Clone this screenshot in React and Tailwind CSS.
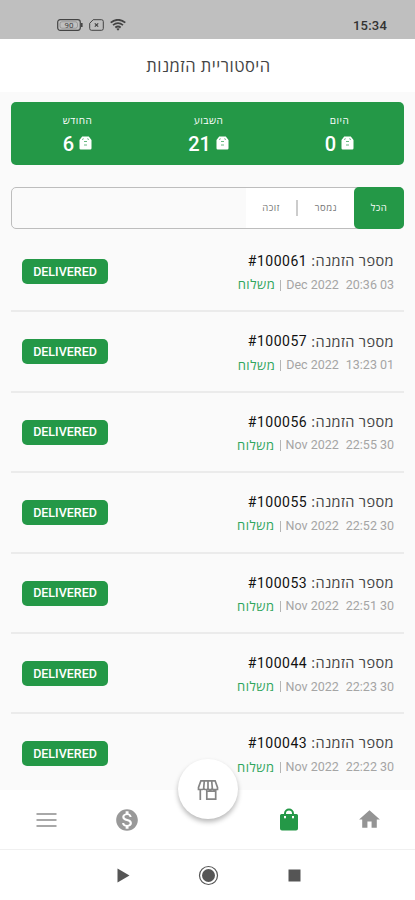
import React from "react";

const stats = [
  { label: "היום", value: "0" },
  { label: "השבוע", value: "21" },
  { label: "החודש", value: "6" },
];

const orders = [
  { id: "100061", date: "Dec 2022", time: "20:36", day: "03" },
  { id: "100057", date: "Dec 2022", time: "13:23", day: "01" },
  { id: "100056", date: "Nov 2022", time: "22:55", day: "30" },
  { id: "100055", date: "Nov 2022", time: "22:52", day: "30" },
  { id: "100053", date: "Nov 2022", time: "22:51", day: "30" },
  { id: "100044", date: "Nov 2022", time: "22:23", day: "30" },
  { id: "100043", date: "Nov 2022", time: "22:22", day: "30" },
];

function StatusBar() {
  return (
    <header className="flex h-[39px] shrink-0 items-start justify-between bg-[#bfbfbf] pl-[57px] pr-[28px] pt-[18px]">
      <div className="flex items-center gap-[6px] pt-px text-[#444]">
        <svg width="26" height="12" viewBox="0 0 26 12" fill="none" stroke="currentColor">
          <rect x="0.7" y="0.7" width="22.6" height="10.6" rx="2.5" strokeWidth="1.2" />
          <path d="M24.8 4v4" strokeWidth="1.6" />
          <rect x="3" y="2.8" width="17.5" height="6.4" rx="2" strokeWidth="0.5" opacity="0.6" />
          <text x="12" y="8.8" textAnchor="middle" fontSize="8" fontFamily="Roboto, sans-serif" fill="currentColor" stroke="none">90</text>
        </svg>
        <svg width="15" height="12" viewBox="0 0 15 12" fill="none" stroke="currentColor">
          <path d="M4.2.7h8.3a1.8 1.8 0 0 1 1.8 1.8v7a1.8 1.8 0 0 1-1.8 1.8h-10A1.8 1.8 0 0 1 .7 9.500V4.300Z" strokeWidth="1" />
          <path d="m5.800 4.300 3.400 3.400m0-3.400L5.800 7.700" strokeWidth="1.2" />
        </svg>
        <svg width="16" height="12" viewBox="0 0 16 12" fill="none" stroke="currentColor" strokeWidth="1.800">
          <path d="M.7 3.600q7.300-5.600 14.600 0M3 6.100q5-3.800 10 0M5.300 8.500q2.700-2 5.400 0" />
          <path d="m6.300 9.800 1.700 2 1.700-2q-1.700-1.200-3.400 0Z" fill="currentColor" stroke="none" />
        </svg>
      </div>
      <span className="text-[13px] font-medium leading-[16px] tracking-[0.2px] text-[#333]">15:34</span>
    </header>
  );
}

function BoxIcon() {
  return (
    <svg width="13" height="14" viewBox="0 0 13 14">
      <path d="M3.200.5h6.600l2.700 3.500v8.300a1.200 1.200 0 0 1-1.200 1.200H1.700a1.200 1.200 0 0 1-1.200-1.200V4Z" fill="#fff" />
      <path d="m3.500 4 .8-1.700M9.500 4l-.8-1.700M5 5.500h3M5 9h3" stroke="#249847" strokeWidth="0.7" />
    </svg>
  );
}

function Order({ order }) {
  return (
    <li className="flex h-[80.4px] shrink-0 items-start justify-between border-b-2 border-[#ebebeb] pl-[11px] pr-[10px]">
      <span className="mt-[27px] flex h-[25px] w-[86px] items-center justify-center rounded-[5px] bg-[#249847] pt-px text-[12.500px] font-medium text-white">DELIVERED</span>
      <div className="flex flex-col items-end pt-[18px]">
        <div className="flex h-[22px] items-center gap-[4px] text-[14px] text-[#111]">
          <span className="pt-px tracking-[0.500px]">#{order.id}</span>
          <span dir="rtl" className="font-['Open_Sans',sans-serif] text-[14.500px] tracking-[0.400px] text-[#444]">מספר הזמנה:</span>
        </div>
        <div className="mt-[2px] flex h-[22px] items-center text-[12.500px] text-[#a5a5a5]">
          <span dir="rtl" className="font-['Open_Sans',sans-serif] text-[13px] tracking-[0.500px] text-[#2fa55c]">משלוח</span>
          <span className="mx-[5px] h-[11px] w-px bg-[#b5b5b5]" />
          <span>{order.date}</span>
          <span className="ml-[7px]">{order.time}</span>
          <span className="ml-[3px]">{order.day}</span>
        </div>
      </div>
    </li>
  );
}

export default function App() {
  return (
    <div className="flex h-[900px] w-[415px] flex-col overflow-hidden bg-[#fafafa] font-[Roboto,sans-serif]">
      <StatusBar />
      <h1 dir="rtl" className="flex h-[53px] shrink-0 items-center justify-center bg-white pl-[2px] pt-px font-['Open_Sans',sans-serif] text-[16.500px] tracking-[0.500px] text-[#444]">היסטוריית הזמנות</h1>
      <section dir="rtl" className="mx-[11px] mt-[10px] grid h-[63px] shrink-0 grid-cols-3 rounded-[5px] bg-[#249847] text-white">
        {stats.map((s) => (
          <div key={s.label} className="flex flex-col items-center pl-[2px] pt-[10px]">
            <span className="font-['Open_Sans',sans-serif] text-[10px] leading-[16px] tracking-[0.500px]">{s.label}</span>
            <div className="mt-[2px] flex h-[26px] items-center gap-[5px]">
              <BoxIcon />
              <span className="pt-[2px] text-[20px] font-medium leading-none">{s.value}</span>
            </div>
          </div>
        ))}
      </section>
      <nav dir="rtl" className="mx-[11px] mt-[22px] flex h-[42px] shrink-0 items-stretch rounded-[5px] border border-[#bdbdbd] font-['Open_Sans',sans-serif] text-[9.500px] tracking-[0.500px] text-[#777]">
        <button className="-my-px -mr-px w-[50px] rounded-[5px] bg-[#249847] pt-px text-white">הכל</button>
        <div className="flex w-[108px] items-center bg-white">
          <button className="w-[56px] pt-px">נמסר</button>
          <span className="h-[16px] w-[2px] bg-[#ccc]" />
          <button className="w-[50px] pt-px">זוכה</button>
        </div>
      </nav>
      <ul className="mx-[11px] mt-[3px] flex min-h-0 flex-1 flex-col overflow-hidden">
        {orders.map((o) => <Order key={o.id} order={o} />)}
      </ul>
      <nav className="relative flex h-[60px] shrink-0 items-center border-b border-[#f0f0f0] bg-white">
        <a className="flex w-[92px] justify-center">
          <svg width="21" height="16" viewBox="0 0 21 16" stroke="#a8a8a8" strokeWidth="2"><path d="M.5 2h20M.5 8h20M.5 14h20" /></svg>
        </a>
        <a className="flex w-[70px] justify-center">
          <svg width="26" height="26" viewBox="0 0 24 24" fill="#999"><path d="M12 2C6.480 2 2 6.480 2 12s4.480 10 10 10 10-4.480 10-10S17.520 2 12 2zm1.410 16.090V20h-2.670v-1.930c-1.710-.36-3.160-1.460-3.270-3.400h1.960c.1 1.050.82 1.870 2.650 1.870 1.960 0 2.400-.98 2.400-1.590 0-.83-.44-1.610-2.670-2.140-2.480-.6-4.180-1.620-4.180-3.670 0-1.720 1.390-2.840 3.110-3.210V4h2.670v1.950c1.860.45 2.790 1.860 2.850 3.390H14.300c-.05-1.110-.64-1.870-2.220-1.870-1.500 0-2.400.68-2.400 1.640 0 .84.65 1.390 2.670 1.910s4.180 1.390 4.180 3.910c-.01 1.830-1.380 2.830-3.120 3.160z" /></svg>
        </a>
        <span className="flex-1" />
        <a className="flex w-[70px] justify-center">
          <svg width="20" height="24" viewBox="0 0 20 24"><path d="M6 7V5.500a4 4 0 0 1 8 0V7" fill="none" stroke="#249847" strokeWidth="2" /><path d="M2.500 6h15A1.500 1.500 0 0 1 19 7.500v13a2 2 0 0 1-2 2H3a2 2 0 0 1-2-2v-13A1.500 1.500 0 0 1 2.500 6Z" fill="#249847" /><path d="M5 8h2v1.500a1 1 0 0 1-2 0ZM13 8h2v1.500a1 1 0 0 1-2 0Z" fill="#fff" /></svg>
        </a>
        <a className="flex w-[91px] justify-center">
          <svg width="25" height="25" viewBox="0 0 24 24" fill="#949494"><path d="M10 20v-6h4v6h5v-8h3L12 3 2 12h3v8z" /></svg>
        </a>
        <a className="absolute left-[178px] top-[-31px] flex h-[60px] w-[60px] items-center justify-center rounded-full bg-white shadow-[0_3px_5px_rgba(0,0,0,0.28)]">
          <svg className="mt-px" width="22" height="22" viewBox="0 0 22 22" fill="none" stroke="#858585" strokeWidth="1.700">
            <path d="M3.500 1.800h15M4 1.500 1.500 8.500v2h4q1.200 0 1.200-1.500l.6-7M18 1.500l2.500 7v2h-4q-1.200 0-1.200-1.500l-.6-7M6.700 9.500q.3 1 1.500 1h1.600q1.200 0 1.200-1.500V1.500M15.300 9.500q-.3 1-1.500 1h-1.600Q11 10.500 11 9M3.300 10.500V21M9.800 12.200h8.900v8H9.800Z" />
          </svg>
        </a>
      </nav>
      <footer className="flex h-[50px] shrink-0 items-center bg-white pl-[117px] text-[#555]">
        <svg width="13" height="15" viewBox="0 0 13 15" fill="currentColor"><path d="M.5.500v14L12.500 7.500Z" /></svg>
        <svg className="ml-[68px]" width="21" height="21" viewBox="0 0 21 21"><circle cx="10.500" cy="10.500" r="9" fill="none" stroke="currentColor" strokeWidth="1.200" /><circle cx="10.500" cy="10.500" r="6.500" fill="currentColor" /></svg>
        <svg className="ml-[69px]" width="13" height="13" viewBox="0 0 13 13" fill="currentColor"><path d="M.5.500h12v12h-12z" /></svg>
      </footer>
    </div>
  );
}
